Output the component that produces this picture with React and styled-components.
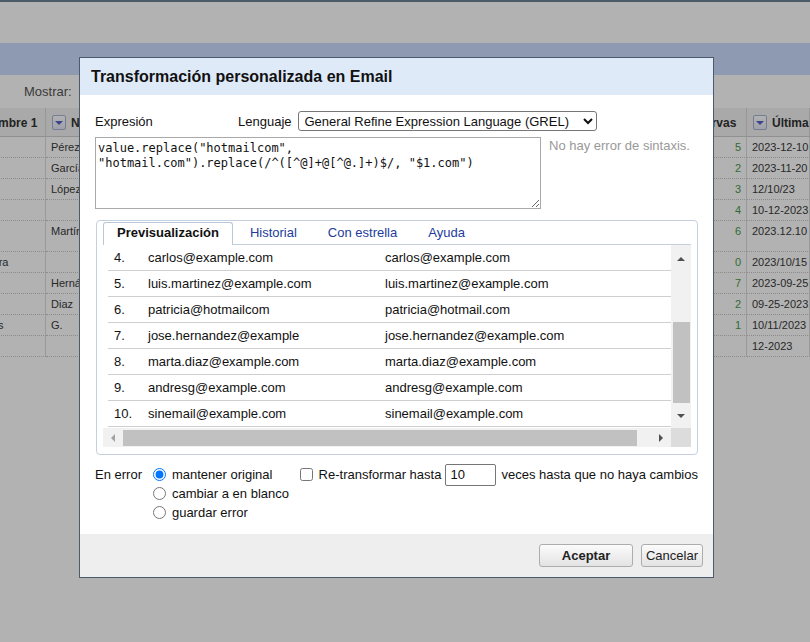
import React from "react";
import styled, { createGlobalStyle } from "styled-components";

const GlobalStyle = createGlobalStyle`
  * { box-sizing: border-box; }
  html, body { margin: 0; padding: 0; }
  body {
    font-family: "Liberation Sans", Arial, sans-serif;
    font-size: 13px;
    color: #222;
    background: #fff;
    overflow: hidden;
  }
`;

/* ---------- page behind the modal ---------- */

const Page = styled.div`
  position: relative;
  width: 810px;
  height: 642px;
  overflow: hidden;
  background: #fff;
`;

const TopStrip = styled.div`
  height: 2px;
  background: #6e8397;
`;

const Header = styled.div`
  height: 41px;
  background: #fff;
`;

const ProjectBar = styled.div`
  height: 32px;
  background: #ccdcff;
`;

const Toolbar = styled.div`
  height: 33px;
  display: flex;
  align-items: center;
  padding-left: 24px;
  color: #555;
`;

const cols = "89px 612px 89px 63px";

const DataScroll = styled.div`
  overflow: hidden;
`;

const DataGrid = styled.div`
  margin-left: -43px;
  width: 853px;
`;

const HeadRow = styled.div`
  display: grid;
  grid-template-columns: ${cols};
  height: 29px;
  background: #f2f2f2;
  border-bottom: 1px solid #cfcfcf;
`;

const HeadCell = styled.div`
  display: flex;
  align-items: center;
  gap: 5px;
  padding: 1px 6px 0 6px;
  border-right: 1px solid #d8d8d8;
  font-size: 12px;
  font-weight: bold;
  color: #333;
  white-space: nowrap;
  overflow: hidden;
`;

const ColButton = styled.span`
  flex: none;
  width: 14px;
  height: 15px;
  display: flex;
  align-items: center;
  justify-content: center;
  border: 1px solid #aab2d4;
  border-radius: 2px;
  background: linear-gradient(#ffffff, #e3e7f5);
`;

const DataRow = styled.div`
  display: grid;
  grid-template-columns: ${cols};
  height: ${(p) => (p.$tall ? 31 : 21)}px;
`;

const DataCell = styled.div`
  padding: 0 5px;
  font-size: 11px;
  line-height: 20px;
  border-right: 1px solid #dcdcdc;
  border-bottom: 1px dotted #c8c8c8;
  white-space: nowrap;
  overflow: hidden;
  color: ${(p) => (p.$num ? "#4a9a4a" : "#3a3a3a")};
  text-align: ${(p) => (p.$num ? "right" : "left")};
`;

const Overlay = styled.div`
  position: absolute;
  inset: 0;
  background: rgba(0, 0, 0, 0.3);
`;

/* ---------- dialog ---------- */

const Dialog = styled.div`
  position: absolute;
  left: 79px;
  top: 57px;
  width: 635px;
  height: 521px;
  display: flex;
  flex-direction: column;
  background: #fff;
  border: 1px solid #4b5b6c;
  color: #111;
`;

const TitleBar = styled.div`
  height: 37px;
  flex: none;
  display: flex;
  align-items: center;
  padding-left: 11px;
  background: #dfeaf9;
  font-size: 16px;
  font-weight: bold;
`;

const Body = styled.div`
  flex: 1;
  padding: 16px 15px 0 15px;
`;

const LangRow = styled.div`
  display: flex;
  align-items: center;
  height: 20px;
`;

const ExprLabel = styled.span`
  width: 143px;
`;

const LangSelect = styled.select`
  margin-left: 6px;
  width: 299px;
  height: 20px;
  font-family: "Liberation Sans", Arial, sans-serif;
  font-size: 13px;
  color: #111;
  border: 1px solid #767676;
  border-radius: 3px;
  background: #fff;
  padding: 0 2px;
`;

const ExprRow = styled.div`
  display: flex;
  margin-top: 6px;
`;

const ExprArea = styled.textarea`
  width: 446px;
  height: 72px;
  margin: 0;
  padding: 3px 2px;
  font-family: "DejaVu Sans Mono", "Liberation Mono", monospace;
  font-size: 12px;
  line-height: 15px;
  color: #111;
  border: 1px solid #a9a9a9;
  resize: both;
`;

const SyntaxNote = styled.div`
  margin-left: 8px;
  padding-top: 1px;
  line-height: 15px;
  color: #999;
`;

const TabsBox = styled.div`
  margin: 11px 0 0 1px;
  width: 602px;
  height: 235px;
  display: flex;
  flex-direction: column;
  padding: 1px 6px 7px 6px;
  border: 1px solid #c5d0df;
  border-radius: 4px;
`;

const TabList = styled.div`
  display: flex;
  flex: none;
  height: 23px;
  border-bottom: 1px solid #c5d0df;
`;

const Tab = styled.div`
  height: 23px;
  margin: 0 3px -1px 0;
  padding: 0 13px 3px 13px;
  display: flex;
  align-items: center;
  border: 1px solid ${(p) => (p.$active ? "#b9c7d8" : "transparent")};
  border-bottom: none;
  border-radius: 3px 3px 0 0;
  background: ${(p) => (p.$active ? "#fff" : "transparent")};
  color: ${(p) => (p.$active ? "#111" : "#233c9b")};
  font-weight: ${(p) => (p.$active ? "bold" : "normal")};
`;

const Panel = styled.div`
  flex: 1;
  display: grid;
  grid-template-columns: 1fr 20px;
  grid-template-rows: 1fr 19px;
`;

const PreviewRows = styled.div`
  padding-left: 5px;
  overflow: hidden;
`;

const PreviewRow = styled.div`
  display: grid;
  grid-template-columns: 35px 237px 1fr;
  height: 26px;
  line-height: 25px;
  border-bottom: 1px solid #cfcfcf;
  white-space: nowrap;
`;

const RowNum = styled.span`
  padding-left: 6px;
`;

const RowVal = styled.span`
  padding-left: 5px;
  overflow: hidden;
`;

const VBar = styled.div`
  display: flex;
  flex-direction: column;
  background: #f1f1f1;
`;

const ArrowBox = styled.div`
  flex: none;
  display: flex;
  align-items: center;
  justify-content: center;
  width: ${(p) => p.$w || "100%"};
  height: ${(p) => p.$h || "100%"};
`;

const VTrack = styled.div`
  flex: 1;
  padding: 0 1px 0 2px;
`;

const VThumb = styled.div`
  margin-top: ${(p) => p.$offset}px;
  height: ${(p) => p.$size}px;
  background: #c1c1c1;
`;

const HBar = styled.div`
  display: flex;
  background: #f1f1f1;
`;

const HTrack = styled.div`
  flex: 1;
  padding: 2px 0 1px 0;
`;

const HThumb = styled.div`
  margin-left: ${(p) => p.$offset}px;
  width: ${(p) => p.$size}px;
  height: 100%;
  background: #c1c1c1;
`;

const Corner = styled.div`
  background: #dcdcdc;
`;

const Options = styled.div`
  display: flex;
  align-items: flex-start;
  margin-top: 10px;
`;

const OptLabel = styled.div`
  width: 59px;
  line-height: 19px;
`;

const RadioList = styled.div`
  width: 152px;
  display: flex;
  flex-direction: column;
`;

const Choice = styled.label`
  display: flex;
  align-items: center;
  height: 19px;
  white-space: nowrap;
`;

const Tick = styled.input`
  margin: 0 6px 0 1px;
  width: 13px;
  height: 13px;
`;

const TimesInput = styled.input`
  margin: 0 5px 0 4px;
  width: 51px;
  height: 22px;
  padding: 0 4px;
  font-family: "Liberation Sans", Arial, sans-serif;
  font-size: 13px;
  color: #111;
  border: 1px solid #767676;
  border-radius: 2px;
`;

const Footer = styled.div`
  height: 43px;
  flex: none;
  display: flex;
  justify-content: flex-end;
  gap: 8px;
  padding: 10px 10px 0 0;
  background: #eeeeee;
`;

const Button = styled.button`
  height: 23px;
  width: ${(p) => p.$w}px;
  padding: 0;
  font-family: "Liberation Sans", Arial, sans-serif;
  font-size: 13px;
  font-weight: ${(p) => (p.$primary ? "bold" : "normal")};
  color: #222;
  border: 1px solid #adadad;
  border-radius: 3px;
  background: linear-gradient(#fbfbfb, #e3e3e3);
`;

/* ---------- data ---------- */

const tableRows = [
  ["", "Pérez", "5", "2023-12-10"],
  ["", "García", "2", "2023-11-20"],
  ["", "López", "3", "12/10/23"],
  ["", "", "4", "10-12-2023"],
  ["", "Martínez", "6", "2023.12.10", true],
  ["Alejandra", "", "0", "2023/10/15"],
  ["", "Hernández", "7", "2023-09-25"],
  ["", "Diaz", "2", "09-25-2023"],
  ["Milagros", "G.", "1", "10/11/2023"],
  ["", "", "", "12-2023"],
];

const previewRows = [
  [4, "carlos@example.com", "carlos@example.com"],
  [5, "luis.martinez@example.com", "luis.martinez@example.com"],
  [6, "patricia@hotmailcom", "patricia@hotmail.com"],
  [7, "jose.hernandez@example", "jose.hernandez@example.com"],
  [8, "marta.diaz@example.com", "marta.diaz@example.com"],
  [9, "andresg@example.com", "andresg@example.com"],
  [10, "sinemail@example.com", "sinemail@example.com"],
];

const expression =
  'value.replace("hotmailcom", "hotmail.com").replace(/^([^@]+@[^@.]+)$/, "$1.com")';

function Triangle({ dir, color = "#505050" }) {
  const pts = {
    up: "0,4 4,0 8,4",
    down: "0,0 8,0 4,4",
    left: "4,0 4,8 0,4",
    right: "0,0 4,4 0,8",
  }[dir];
  const vertical = dir === "up" || dir === "down";
  return (
    <svg width={vertical ? 8 : 4} height={vertical ? 4 : 8}>
      <polygon points={pts} fill={color} />
    </svg>
  );
}

function ColumnHead({ name }) {
  return (
    <HeadCell>
      <ColButton>
        <Triangle dir="down" color="#5562c8" />
      </ColButton>
      <span>{name}</span>
    </HeadCell>
  );
}

export default function App() {
  return (
    <Page>
      <GlobalStyle />
      <TopStrip />
      <Header />
      <ProjectBar />
      <Toolbar>Mostrar:</Toolbar>
      <DataScroll>
        <DataGrid>
          <HeadRow>
            <ColumnHead name="Nombre 1" />
            <ColumnHead name="Nombre 2" />
            <ColumnHead name="Reservas" />
            <ColumnHead name="Última visita" />
          </HeadRow>
          {tableRows.map(([a, b, c, d, tall], i) => (
            <DataRow key={i} $tall={tall}>
              <DataCell>{a}</DataCell>
              <DataCell>{b}</DataCell>
              <DataCell $num>{c}</DataCell>
              <DataCell>{d}</DataCell>
            </DataRow>
          ))}
        </DataGrid>
      </DataScroll>

      <Overlay />

      <Dialog>
        <TitleBar>Transformación personalizada en Email</TitleBar>
        <Body>
          <LangRow>
            <ExprLabel>Expresión</ExprLabel>
            <span>Lenguaje</span>
            <LangSelect defaultValue="grel">
              <option value="grel">General Refine Expression Language (GREL)</option>
            </LangSelect>
          </LangRow>
          <ExprRow>
            <ExprArea defaultValue={expression} spellCheck={false} />
            <SyntaxNote>No hay error de sintaxis.</SyntaxNote>
          </ExprRow>

          <TabsBox>
            <TabList>
              <Tab $active>Previsualización</Tab>
              <Tab>Historial</Tab>
              <Tab>Con estrella</Tab>
              <Tab>Ayuda</Tab>
            </TabList>
            <Panel>
              <PreviewRows>
                {previewRows.map(([n, before, after]) => (
                  <PreviewRow key={n}>
                    <RowNum>{n}.</RowNum>
                    <RowVal>{before}</RowVal>
                    <RowVal>{after}</RowVal>
                  </PreviewRow>
                ))}
              </PreviewRows>
              <VBar>
                <ArrowBox $h="28px">
                  <Triangle dir="up" />
                </ArrowBox>
                <VTrack>
                  <VThumb $offset={49} $size={81} />
                </VTrack>
                <ArrowBox $h="24px">
                  <Triangle dir="down" />
                </ArrowBox>
              </VBar>
              <HBar>
                <ArrowBox $w="19px">
                  <Triangle dir="left" color="#a3a3a3" />
                </ArrowBox>
                <HTrack>
                  <HThumb $offset={1} $size={514} />
                </HTrack>
                <ArrowBox $w="20px">
                  <Triangle dir="right" />
                </ArrowBox>
              </HBar>
              <Corner />
            </Panel>
          </TabsBox>

          <Options>
            <OptLabel>En error</OptLabel>
            <RadioList>
              <Choice>
                <Tick type="radio" name="onerror" defaultChecked />
                mantener original
              </Choice>
              <Choice>
                <Tick type="radio" name="onerror" />
                cambiar a en blanco
              </Choice>
              <Choice>
                <Tick type="radio" name="onerror" />
                guardar error
              </Choice>
            </RadioList>
            <Choice>
              <Tick type="checkbox" />
              Re-transformar hasta
              <TimesInput type="text" defaultValue="10" />
              veces hasta que no haya cambios
            </Choice>
          </Options>
        </Body>
        <Footer>
          <Button $primary $w={94}>Aceptar</Button>
          <Button $w={62}>Cancelar</Button>
        </Footer>
      </Dialog>
    </Page>
  );
}
